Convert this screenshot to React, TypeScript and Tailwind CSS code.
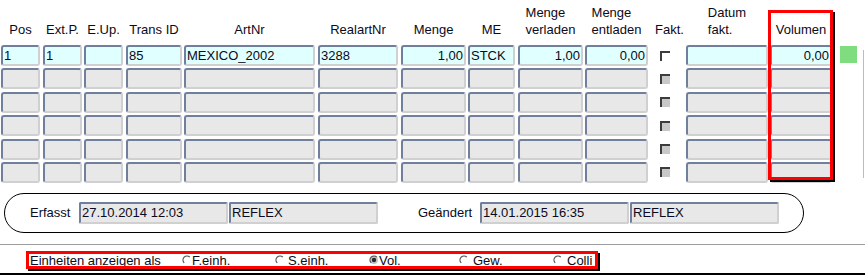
type Col = {
  key: string;
  cls: string;
  head: string[];
  headCls?: string;
  value?: string;
  right?: boolean;
  kind?: "field" | "check" | "green";
};

const cols: Col[] = [
  { key: "pos", cls: "ml-[1px] w-[39px]", head: ["Pos"], value: "1" },
  { key: "ext", cls: "ml-[3px] w-[39px]", head: ["Ext.P."], value: "1" },
  { key: "eup", cls: "ml-[2px] w-[39px]", head: ["E.Up."], value: "" },
  { key: "trans", cls: "ml-[3px] w-[56px]", head: ["Trans ID"], value: "85" },
  { key: "art", cls: "ml-[2px] w-[131px]", head: ["ArtNr"], value: "MEXICO_2002" },
  { key: "real", cls: "ml-[3px] w-[80px]", head: ["RealartNr"], value: "3288" },
  { key: "menge", cls: "ml-[3px] w-[65px]", head: ["Menge"], value: "1,00", right: true },
  { key: "me", cls: "ml-[2px] w-[47px]", head: ["ME"], value: "STCK" },
  { key: "verl", cls: "ml-[3px] w-[65px]", head: ["Menge", "verladen"], value: "1,00", right: true },
  { key: "entl", cls: "ml-[2px] w-[63px]", head: ["Menge", "entladen"], value: "0,00", right: true },
  { key: "fakt", cls: "w-[38px]", head: ["Fakt."], headCls: "pl-[5px]", kind: "check" },
  { key: "datum", cls: "w-[82px]", head: ["Datum", "fakt."], value: "" },
  { key: "vol", cls: "ml-[2px] w-[62px]", head: ["Volumen"], value: "0,00", right: true },
  { key: "green", cls: "ml-[8px] w-[17px]", head: [], kind: "green" },
];

const cell =
  "h-full rounded-[3px] border-2 border-t-[#6f7f9c] border-l-[#6f7f9c] border-r-[#d0d0d0] border-b-[#d0d0d0] flex items-center px-[1px] overflow-hidden whitespace-nowrap";

function Radio({ checked }: { checked?: boolean }) {
  return (
    <svg width="10" height="10" viewBox="0 0 10 10" className="shrink-0">
      {checked && <circle cx="5" cy="5" r="4" fill="#c4c4c4" />}
      {checked && <circle cx="5" cy="5" r="2.2" fill="#2a2a2a" />}
      <path d="M2.17 7.83 A4 4 0 0 1 7.83 2.17" fill="none" stroke="#505050" strokeWidth="1.2" />
    </svg>
  );
}

function Field({ w, text }: { w: string; text: string }) {
  return (
    <div
      className={`${w} h-[22px] rounded-[2px] border-2 border-t-[#6f7f9c] border-l-[#6f7f9c] border-r-[#d0d0d0] border-b-[#d0d0d0] bg-[#e8e8e8] flex items-center px-[1px] whitespace-nowrap`}
    >
      {text}
    </div>
  );
}

export default function App() {
  const rows = [0, 1, 2, 3, 4, 5];

  return (
    <div className="relative w-[865px] h-[277px] overflow-hidden bg-white font-['Liberation_Sans',Arial,sans-serif] text-[13px] leading-[17px] text-[#0a0a20]">
      <div className="flex">
        <div className="w-[857px]">
          {/* column headers */}
          <div className="flex h-[45px] items-end pb-[7px]">
            {cols.map((c) => (
              <div key={c.key} className={`${c.cls} flex justify-center`}>
                <div className={`text-left whitespace-nowrap ${c.headCls ?? ""}`}>
                  {c.head.map((h) => (
                    <div key={h}>{h}</div>
                  ))}
                </div>
              </div>
            ))}
          </div>

          {/* rows */}
          <div className="flex flex-col gap-[2.4px]">
            {rows.map((r) => (
              <div key={r} className="flex h-[21px]">
                {cols.map((c) => {
                  if (c.kind === "green") {
                    return (
                      <div key={c.key} className={c.cls}>
                        {r === 0 && <div className="mt-[1px] h-[17px] w-[17px] bg-[#7fdc7f]" />}
                      </div>
                    );
                  }
                  if (c.kind === "check") {
                    return (
                      <div key={c.key} className={`${c.cls} flex items-center pl-[12px]`}>
                        <div
                          className={`h-[10px] w-[10px] border-t-2 border-l-2 border-[#3c3c3c] ${
                            r === 0 ? "bg-white" : "bg-[#c8c8c8]"
                          }`}
                        />
                      </div>
                    );
                  }
                  return (
                    <div
                      key={c.key}
                      className={`${c.cls} ${cell} ${r === 0 ? "bg-[#e0ffff]" : "bg-[#e8e8e8]"} ${
                        c.right ? "justify-end" : "justify-start"
                      }`}
                    >
                      {r === 0 ? c.value : ""}
                    </div>
                  );
                })}
              </div>
            ))}
          </div>
        </div>
        <div className="ml-[6px] mt-[50px] h-[128px] w-px bg-[#b8bcc6]" />
      </div>

      {/* Erfasst / Geändert panel */}
      <div className="ml-[4px] mt-[10px] flex h-[40px] w-[800px] items-center rounded-full border border-black pl-[25px]">
        <span className="w-[49px]">Erfasst</span>
        <Field w="w-[149px]" text="27.10.2014 12:03" />
        <div className="ml-[1px]">
          <Field w="w-[149px]" text="REFLEX" />
        </div>
        <span className="ml-[40px] w-[62px]">Geändert</span>
        <Field w="w-[149px]" text="14.01.2015 16:35" />
        <div className="ml-[1px]">
          <Field w="w-[149px]" text="REFLEX" />
        </div>
      </div>

      <div className="mt-[11px] h-px bg-[#9c9c9c]" />

      {/* unit selection */}
      <div className="flex h-[28px] items-start pl-[30px] pt-[7px]">
        <span className="w-[152px] whitespace-nowrap">Einheiten anzeigen als</span>
        <div className="flex w-[93px] items-center">
          <Radio />
          <span className="ml-[0px]">F.einh.</span>
        </div>
        <div className="flex w-[94px] items-center">
          <Radio />
          <span className="ml-[3px]">S.einh.</span>
        </div>
        <div className="flex w-[90px] items-center">
          <Radio checked />
          <span className="ml-[0px]">Vol.</span>
        </div>
        <div className="flex w-[94px] items-center">
          <Radio />
          <span className="ml-[4px]">Gew.</span>
        </div>
        <div className="flex items-center">
          <Radio />
          <span className="ml-[4px]">Colli</span>
        </div>
      </div>
      <div className="h-[2px] bg-black" />

      {/* red highlight frames */}
      <div className="absolute left-[768px] top-[10px] h-[170px] w-[65px] border-[3px] border-[#ff0000] shadow-[2px_2px_0_#000]" />
      <div className="absolute left-[26px] top-[251px] h-[18px] w-[572px] border-[3px] border-[#ff0000] shadow-[2px_2px_0_#000]" />
    </div>
  );
}
